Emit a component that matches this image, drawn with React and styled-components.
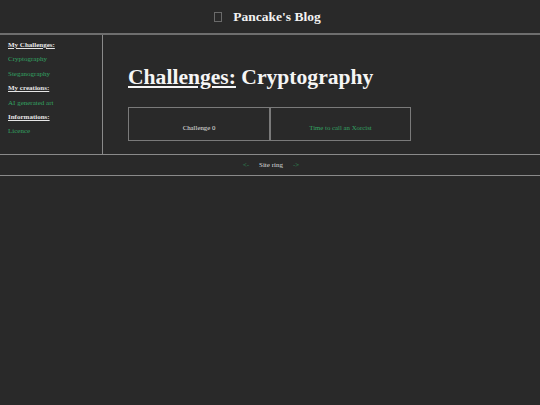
import React from "react";
import styled, { createGlobalStyle } from "styled-components";

const GlobalStyle = createGlobalStyle`
  html, body {
    margin: 0;
    padding: 0;
    background: #292929;
    color: #e6e6e6;
    font-family: "Liberation Serif", "Times New Roman", serif;
  }
`;

const Header = styled.header`
  height: 33px;
  display: flex;
  align-items: center;
  justify-content: center;
  border-bottom: 2px solid #6e6e6e;
`;

const Title = styled.h1`
  margin: 0;
  padding-right: 5px;
  font-size: 13.5px;
  font-weight: bold;
  color: #f2f2f2;
  display: flex;
  align-items: center;
  gap: 11px;
`;

const Tofu = styled.span`
  display: inline-block;
  width: 6px;
  height: 8px;
  border: 1px solid #6a6a6a;
`;

const Layout = styled.div`
  display: flex;
  border-bottom: 1px solid #8a8a8a;
`;

const Sidebar = styled.nav`
  width: 94px;
  padding: 3px 0 8px 8px;
  border-right: 1px solid #8a8a8a;
  display: flex;
  flex-direction: column;
`;

const Section = styled.span`
  font-size: 7px;
  font-weight: bold;
  text-decoration: underline;
  color: #e6e6e6;
  line-height: 14.4px;
`;

const NavLink = styled.a`
  font-size: 7px;
  color: #33a363;
  text-decoration: none;
  line-height: 14.4px;
`;

const Main = styled.main`
  flex: 1;
  padding: 29px 0 13px 25px;
`;

const Heading = styled.h2`
  margin: 0 0 17px;
  font-size: 21.6px;
  font-weight: bold;
  color: #f5f5f5;
  line-height: 26px;
`;

const Under = styled.span`
  text-decoration: underline;
`;

const Table = styled.div`
  display: grid;
  grid-template-columns: 142px 141px;
`;

const Cell = styled.div`
  border: 1px solid #7a7a7a;
  display: flex;
  align-items: center;
  justify-content: center;
  padding-top: 6px;
  box-sizing: border-box;
  height: 34px;
  font-size: 6.8px;
  color: ${(p) => (p.$link ? "#33a363" : "#e0e0e0")};
`;

const Footer = styled.footer`
  height: 20px;
  display: flex;
  align-items: center;
  justify-content: center;
  gap: 10px;
  border-bottom: 1px solid #8a8a8a;
  font-size: 7px;
  padding-left: 2px;
`;

const Arrow = styled.a`
  color: #2f8a56;
  text-decoration: none;
`;

const Ring = styled.span`
  color: #dcdcdc;
`;

export default function App() {
  return (
    <>
      <GlobalStyle />
      <Header>
        <Title>
          <Tofu />
          Pancake's Blog
        </Title>
      </Header>
      <Layout>
        <Sidebar>
          <Section>My Challenges:</Section>
          <NavLink href="#">Cryptography</NavLink>
          <NavLink href="#">Steganography</NavLink>
          <Section>My creations:</Section>
          <NavLink href="#">AI generated art</NavLink>
          <Section>Informations:</Section>
          <NavLink href="#">Licence</NavLink>
        </Sidebar>
        <Main>
          <Heading>
            <Under>Challenges:</Under> Cryptography
          </Heading>
          <Table>
            <Cell>Challenge 0</Cell>
            <Cell $link>Time to call an Xorcist</Cell>
          </Table>
        </Main>
      </Layout>
      <Footer>
        <Arrow href="#">&lt;-</Arrow>
        <Ring>Site ring</Ring>
        <Arrow href="#">-&gt;</Arrow>
      </Footer>
    </>
  );
}
